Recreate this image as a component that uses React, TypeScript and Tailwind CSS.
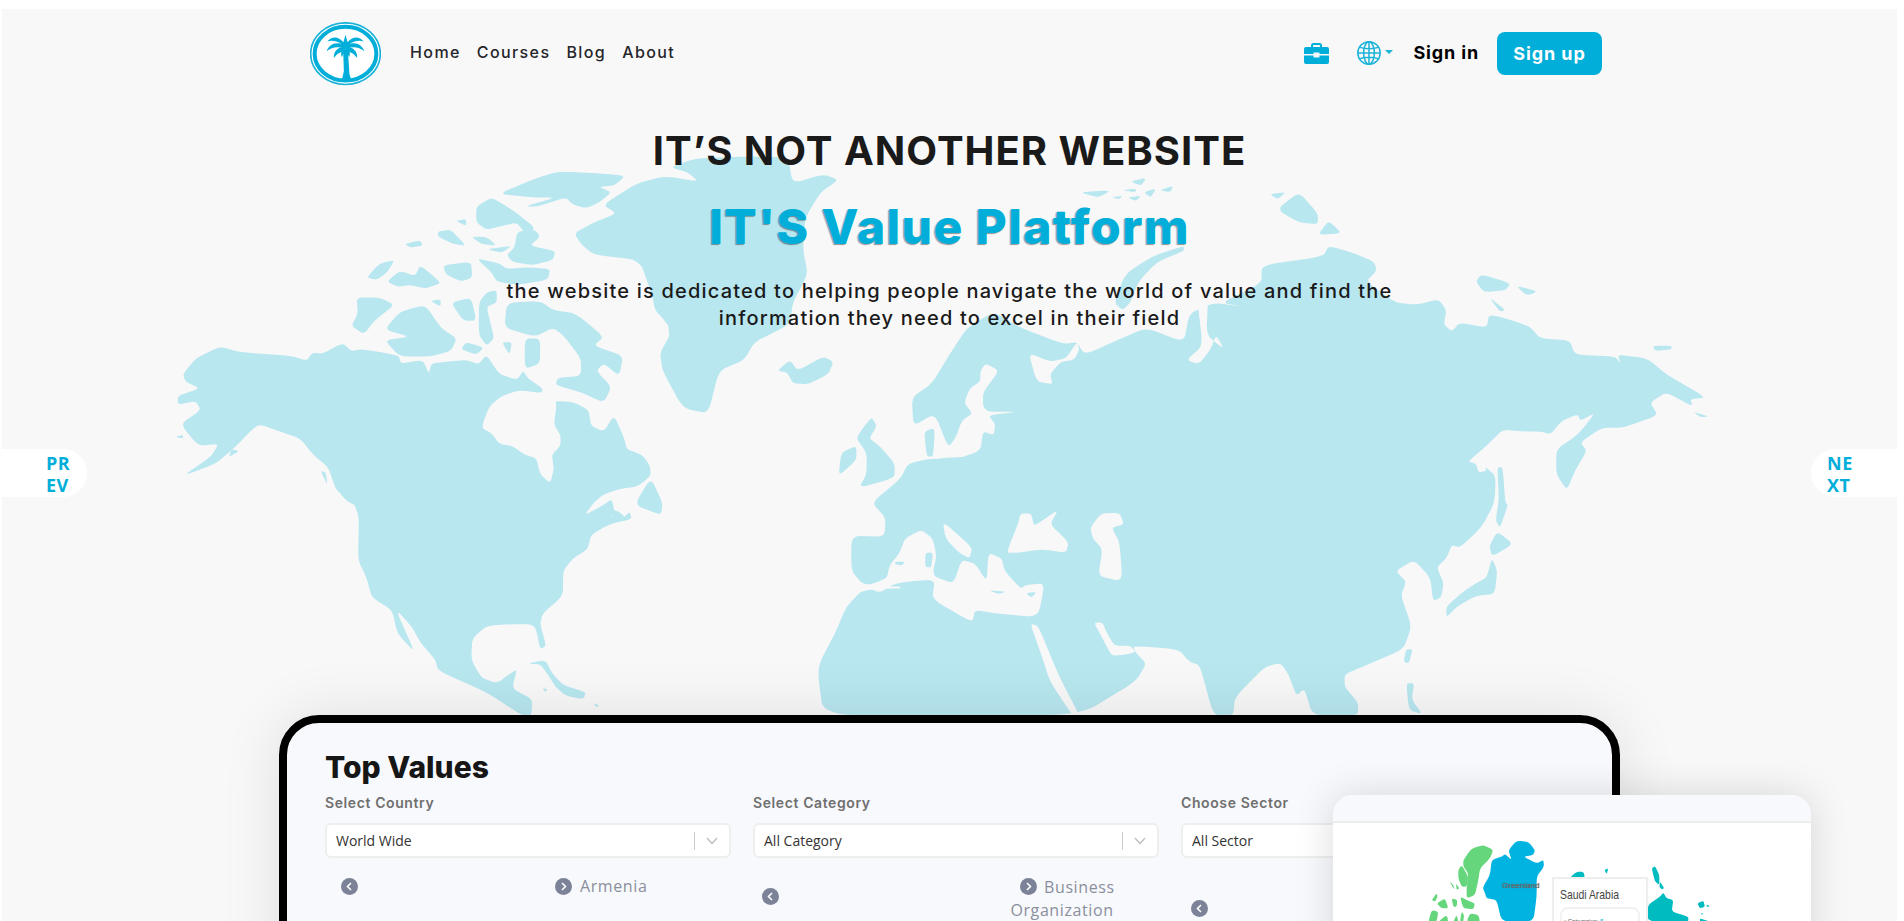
import React from "react";

type P = number[];
const smooth = (p: P) => {
  const n = p.length / 2;
  const pt = (i: number) => [p[((i + n) % n) * 2], p[((i + n) % n) * 2 + 1]];
  const t = 0.28;
  let d = "";
  for (let i = 0; i < n; i++) {
    const a = pt(i - 1);
    const c = pt(i);
    const b = pt(i + 1);
    const s = [c[0] + (a[0] - c[0]) * t, c[1] + (a[1] - c[1]) * t];
    const e = [c[0] + (b[0] - c[0]) * t, c[1] + (b[1] - c[1]) * t];
    d += `${i === 0 ? "M" : "L"}${s[0]} ${s[1]}Q${c[0]} ${c[1]} ${e[0]} ${e[1]}`;
  }
  return d + "Z";
};
const LAND = "#b8e7f0";
const SEA = "#f8f8f8";

const west: P[] = [
  [45,600,70,555,118,522,155,538,255,548,288,562,298,540,320,542,358,512,375,535,395,530,440,540,468,548,472,570,515,560,527,598,532,570,560,565,600,560,625,572,640,545,665,600,700,615,712,590,720,610,750,640,748,652,705,645,670,660,645,690,630,750,650,765,665,795,690,800,715,825,738,835,745,880,765,905,772,865,768,825,785,800,785,770,772,740,777,690,775,675,810,678,840,700,845,745,870,760,890,715,910,780,915,810,945,825,960,855,962,885,935,915,905,920,870,935,850,960,832,995,870,965,885,950,890,975,885,1000,910,1000,920,985,925,1005,880,1020,845,1050,838,1090,810,1115,790,1150,790,1220,750,1270,745,1300,757,1360,745,1370,735,1300,680,1300,640,1305,612,1340,610,1400,630,1450,660,1465,680,1445,700,1425,690,1480,730,1510,728,1556,710,1556,640,1490,545,1430,540,1400,510,1350,495,1310,470,1270,465,1268,500,1380,465,1325,455,1260,415,1225,405,1170,388,1120,390,1000,380,960,345,925,330,860,300,825,275,780,235,760,195,740,180,755,150,800,110,850,45,885,100,830,115,795,75,800,40,740,80,700,70,675,35,685,35,660,78,640,50,620],
  [812,205,850,175,895,150,868,125,935,65,990,45,1055,60,1035,35,1000,20,1050,-5,1150,-10,1231,-8,1240,65,1300,40,1330,55,1295,90,1265,160,1260,250,1270,320,1240,400,1235,460,1165,510,1145,560,1095,590,1075,710,1025,695,985,590,980,540,1000,490,990,450,970,420,965,380,940,280,850,265,825,235],
  [662,95,740,50,780,32,870,38,912,45,890,72,860,75,885,90,860,120,835,135,810,125,795,105,740,130,715,130,775,105,735,105],
  [620,130,650,105,680,130,700,150,735,190,720,215,700,175,670,185,640,195,620,175],
  [700,200,735,195,745,215,725,240,775,255,770,280,730,295,690,285,680,265,695,245],
  [545,200,570,195,600,240,575,235,545,215],
  [580,170,600,165,600,185],
  [610,215,640,215,660,240,630,235],
  [640,250,690,240,670,260],
  [480,235,510,225,515,240,490,245],
  [405,330,430,290,460,280,445,315,425,335],
  [445,340,470,310,500,325,510,295,540,330,550,345,520,360,490,350,465,355],
  [555,295,610,285,612,330,590,340,560,320],
  [620,275,665,290,680,305,720,300,765,305,760,335,700,350,660,340,650,315],
  [385,385,430,385,460,405,420,450,400,488,375,465,388,430],
  [440,475,470,425,520,405,550,470,582,500,570,535,530,550,470,550,440,505,490,495],
  [530,395,550,390,550,410],
  [570,400,610,385,620,450,595,450],
  [625,400,640,370,660,365,660,400,640,410,650,470,655,500,640,520,625,490],
  [680,400,745,395,770,420,815,430,870,495,850,520,908,548,900,605,870,570,855,590,885,635,870,680,825,650,775,630,780,610,825,605,825,555,790,490,770,470,735,495,675,470],
  [715,500,745,500,745,570,715,585],
  [600,510,635,525,620,545,590,530],
  [670,510,690,510,685,545],
  [1210,590,1235,560,1250,590,1300,550,1320,565,1310,600,1270,628,1240,625,1230,595],
  [1375,755,1395,720,1405,745,1390,780,1410,800,1440,850,1440,890,1370,918,1385,880,1385,820,1365,780],
  [1335,820,1365,800,1365,840,1330,885],
  [1395,960,1445,900,1465,865,1520,835,1600,830,1600,1200,1380,1192,1355,1150,1355,1052,1420,1055,1422,1000],
  [1380,1200,1345,1250,1325,1320,1288,1420,1300,1556,1600,1556,1600,1200],
  [720,1410,755,1400,770,1440,790,1470,835,1490,830,1510,795,1500,775,1475,760,1440,745,1412],
  [850,1520,862,1528,855,1532],
  [750,1478,760,1482,755,1490],
  [962,890,985,960,982,995,930,965],
  [315,870,325,875,328,910],
  [350,930,385,955,400,975,370,960],
  [140,810,155,815,135,832],
  [30,775,45,770,45,780],
  [880,975,900,985,915,1005,890,1005],
];
const westSea: P[] = [
  [1380,1192,1410,1212,1440,1185,1520,1172,1515,1150,1522,1110,1515,1060,1492,1035,1460,1060,1450,1100,1430,1135,1425,1170,1400,1185],
];
const westIsles: P[] = [
  [1500,1100,1515,1100,1512,1140,1500,1140],
  [1440,1125,1460,1125,1455,1135,1442,1133],
];
const east: P[] = [
  [0,895,15,850,60,835,95,842,150,815,155,760,175,770,178,740,165,715,220,705,165,705,155,690,155,650,185,590,160,570,150,590,150,620,130,640,120,680,135,710,115,730,105,775,90,805,65,710,25,745,22,665,60,625,90,550,125,470,175,425,225,470,305,515,330,510,345,545,420,495,460,470,530,510,540,430,585,400,640,410,600,400,675,345,675,295,790,270,800,240,845,260,885,285,890,310,870,340,925,400,965,405,1005,390,1020,420,1015,460,1030,480,1045,455,1095,470,1100,430,1175,465,1195,500,1250,505,1260,545,1335,550,1345,570,1340,545,1395,555,1430,600,1505,665,1475,670,1480,690,1430,650,1400,680,1415,715,1350,750,1310,750,1270,790,1282,815,1260,870,1245,925,1225,880,1225,810,1265,770,1298,708,1270,730,1265,712,1235,730,1215,768,1195,760,1165,760,1125,755,1095,800,1060,845,1075,850,1080,875,1095,870,1092,858,1112,885,1110,960,1085,1030,1045,1085,1030,1078,1020,1115,1002,1140,1015,1185,1010,1225,995,1235,990,1170,960,1120,925,1150,945,1180,935,1220,955,1305,940,1370,870,1415,830,1440,830,1475,855,1520,855,1556,770,1556,755,1480,740,1500,725,1440,710,1408,680,1420,625,1505,622,1556,585,1556,560,1415,540,1405,520,1370,435,1360,440,1380,460,1410,440,1460,335,1556,0,1556],
  [45,760,65,750,62,830,50,830],
  [400,400,420,320,470,270,530,240,530,255,480,285,445,340,430,400,415,420],
];
const eastSea: P[] = [
  [240,540,255,620,285,628,280,600,300,565,325,560,335,530,330,510,310,555,280,565],
  [555,392,575,385,572,490,605,530,590,490,580,530,558,572,535,560,565,520],
  [205,1075,220,1020,225,990,245,990,250,1025,270,1005,295,980,280,1020,315,1070,310,1100,265,1090,220,1100,200,1100],
  [355,1030,375,990,410,988,418,1020,395,1030,410,1070,415,1180,370,1165,378,1090,360,1060],
  [0,1180,65,1175,60,1230,135,1295,140,1260,180,1270,258,1280,270,1185,235,1190,225,1200,195,1150,190,1115,165,1100,162,1180,140,1130,115,1120,100,1185,70,1170,50,1150],
  [80,1012,135,1085,130,1115,110,1100,85,1060],
  [243,1298,258,1305,290,1420,302,1460,335,1556,322,1556,280,1460,265,1390],
  [362,1295,378,1295,385,1320,400,1360,430,1360,440,1378,420,1385,395,1388,378,1340],
  [640,1510,655,1510,650,1556,640,1556],
];
const eastIsles: P[] = [
  [1115,860,1125,860,1130,960,1135,965,1120,1030,1112,1010,1118,950],
  [1115,1040,1145,1075,1105,1110,1100,1080],
  [1105,1115,1115,1150,1110,1215,1075,1220,1040,1250,1020,1280,1020,1250,1050,1210,1075,1185,1095,1170],
  [945,1370,957,1370,950,1410,940,1405],
  [945,1465,960,1465,955,1510,975,1552,950,1540],
  [335,90,395,85,370,105],
  [395,105,415,100,410,110],
  [415,85,440,80,440,90],
  [430,60,460,50,450,72],
  [425,105,450,100,440,115],
  [455,90,478,80,468,105],
  [485,85,510,72,505,90],
  [690,95,720,90,705,110],
  [710,130,745,90,780,150,780,180,745,175,710,145],
  [780,210,800,170,825,205],
  [1075,340,1085,320,1140,345,1130,365,1090,370],
  [1150,352,1190,368,1170,380],
  [1100,385,1130,420,1120,425],
  [1405,520,1440,520,1440,530,1410,535],
  [1480,705,1510,718,1495,720],
  [165,1205,198,1208,185,1215],
  [235,1212,255,1210,245,1225],
];

const WEST = "translate(160 160) scale(0.5102 0.35714)";
const EAST = "translate(900 160) scale(0.53571 0.35714)";

function WorldMap() {
  return (
    <svg className="absolute left-[-2px] top-[-9px]" width={1904} height={921} viewBox="0 0 1904 921">
      <g transform={WEST}>{west.map((p, i) => <path key={i} d={smooth(p)} fill={LAND} />)}</g>
      <g transform={EAST}>{east.map((p, i) => <path key={i} d={smooth(p)} fill={LAND} />)}</g>
      <g transform={WEST}>
        <ellipse cx={985} cy={472} rx={12} ry={20} fill={SEA} />
        <ellipse cx={792} cy={552} rx={8} ry={18} fill={SEA} />
        <ellipse cx={735} cy={675} rx={10} ry={8} fill={SEA} />
        <ellipse cx={763} cy={686} rx={5} ry={9} fill={SEA} />
        {westSea.map((p, i) => <path key={i} d={smooth(p)} fill={SEA} />)}
      </g>
      <g transform={EAST}>{eastSea.map((p, i) => <path key={i} d={smooth(p)} fill={SEA} />)}</g>
      <g transform={WEST}>{westIsles.map((p, i) => <path key={i} d={smooth(p)} fill={LAND} />)}</g>
      <g transform={EAST}>{eastIsles.map((p, i) => <path key={i} d={smooth(p)} fill={LAND} />)}</g>
    </svg>
  );
}

function Logo() {
  return (
    <svg width={71} height={64} viewBox="28 22 214 192" className="mt-px">
      <ellipse cx={135} cy={117} rx={105} ry={93} fill="#fff" stroke="#1cb3d9" strokeWidth={5} />
      <ellipse cx={135} cy={117} rx={93} ry={81} fill="none" stroke="#00aed9" strokeWidth={12} />
      <g fill="#00aed9">
        <path d="M135 60L126 92H144Z" />
        <path d="M135 90C115 62 95 64 80 80C100 74 120 82 135 97Z" />
        <path d="M135 90C155 62 175 64 190 80C170 74 150 82 135 97Z" />
        <path d="M135 92C105 78 85 90 78 110C95 95 115 96 135 102Z" />
        <path d="M135 92C165 78 185 90 192 110C175 95 155 96 135 102Z" />
        <path d="M135 95C112 98 98 110 100 130C110 116 122 110 135 108Z" />
        <path d="M135 95C158 98 172 110 170 130C160 116 148 110 135 108Z" />
        <path d="M126 100C122 108 120 120 124 128C128 118 132 112 136 106Z" />
        <path d="M144 100C148 108 150 120 146 128C142 118 138 112 134 106Z" />
        <path d="M128 105H142L147 180L153 196H124L130 170Z" />
      </g>
    </svg>
  );
}

function Briefcase() {
  return (
    <svg width={25} height={21} viewBox="0 0 25 21">
      <rect x={8} y={1} width={9} height={5} rx={1.5} fill="none" stroke="#00aed9" strokeWidth={2} />
      <path d="M2 4H23A2 2 0 0 1 25 6V11H15.5V9.5H9.5V11H0V6A2 2 0 0 1 2 4Z" fill="#00aed9" />
      <path d="M0 12.5H9.5V14.5H15.5V12.5H25V19A2 2 0 0 1 23 21H2A2 2 0 0 1 0 19Z" fill="#00aed9" />
    </svg>
  );
}

function Globe() {
  return (
    <svg width={24} height={24} viewBox="0 0 24 24" fill="none" stroke="#1cb3d9" strokeWidth={1.5}>
      <circle cx={12} cy={12} r={11.2} />
      <ellipse cx={12} cy={12} rx={5.4} ry={11.2} />
      <path d="M12 1V23M1 12H23M2.8 6.4C8 8 16 8 21.2 6.4M2.8 17.6C8 16 16 16 21.2 17.6" />
    </svg>
  );
}

function Arrow({ right = false }: { right?: boolean }) {
  return (
    <svg width={17} height={17} viewBox="0 0 17 17" className="inline-block shrink-0 align-[-2px]">
      <circle cx={8.5} cy={8.5} r={8.5} fill="#7c8398" />
      <path d={right ? "M7 5L10.5 8.5L7 12" : "M10 5L6.5 8.5L10 12"} fill="none" stroke="#fff" strokeWidth={1.6} />
    </svg>
  );
}

function Select({ label, value }: { label: string; value: string }) {
  return (
    <div>
      <div className="h-5 font-['Inter'] text-[14px] leading-5 font-semibold tracking-[0.6px] text-[#6f6f6f]">{label}</div>
      <div className="mt-[10px] flex h-[35px] items-center rounded-[6px] border-2 border-[#eeeeee] bg-white pl-[9px] pr-[10px]">
        <span className="flex-1 font-['Open_Sans'] text-[14px] text-[#333]">{value}</span>
        <span className="h-[18px] w-px bg-[#cccccc]" />
        <svg width={12} height={8} viewBox="0 0 12 8" className="ml-[11px] mr-[1px]" fill="none" stroke="#bbb" strokeWidth={1.2}><path d="M1 1L6 6.5L11 1" /></svg>
      </div>
    </div>
  );
}

const itemText = "font-['Open_Sans'] text-[16px] leading-[23px] tracking-[0.6px] text-[#8a8f9c]";

function MiniMap() {
  const g: P[] = [
    [430,240,455,205,490,195,520,210,510,235,480,265,475,300,465,345,440,355,440,320,445,280,430,260],
    [415,270,425,255,445,290,440,320,425,320,415,295],
    [388,305,400,315,405,330],[408,310,418,325,410,330],[335,360,350,340,353,350,345,365],
    [350,370,375,355,385,385,365,385],[395,355,412,360,410,380,400,380],[420,350,440,360,465,370,460,388,430,385],
    [325,425,335,390,355,395,350,425],[355,425,380,405,385,425],[400,425,410,405,415,425],[420,425,425,395,432,405,430,425],[440,425,450,400,475,405,480,425],
  ];
  const b: P[] = [[488,322,510,285,515,240,545,230,555,222,575,240,565,210,590,182,625,185,645,210,640,225,610,230,650,250,670,240,672,260,650,290,650,350,640,425,545,425,530,360,500,355,495,340]];
  const t: P[] = [
    [995,265,1005,258,1018,285,1018,315,1005,305],[1020,305,1033,325,1025,328,1018,320],
    [983,375,1020,350,1030,338,1040,355,1060,360,1055,395,1105,410,1105,425,983,425],
    [1132,370,1150,362,1155,380,1140,385],[1160,373,1170,380,1160,380],[1143,400,1150,400,1146,405],[1140,415,1170,425,1140,425],
    [750,292,770,275,790,275,795,292],[853,270,865,265,860,282],
  ];
  return (
    <svg className="absolute left-[-13px] top-[-43px]" width={520} height={141} viewBox="0 0 1560 423">
      {g.map((p, i) => <path key={i} d={smooth(p)} fill="#65d67b" />)}
      {b.map((p, i) => <path key={i} d={smooth(p)} fill="#00b3e0" />)}
      {t.map((p, i) => <path key={i} d={smooth(p)} fill="#00bcc0" />)}
    </svg>
  );
}

export default function App() {
  return (
    <div className="h-[921px] overflow-hidden bg-white pl-[2px] pr-[7px] pt-[9px]">
      <div className="relative h-[912px] overflow-hidden bg-[#f8f8f8]">
        <WorldMap />

        <div className="relative flex h-[88px] items-center pl-[308px] pr-[295px] font-['Inter']">
          <Logo />
          <nav className="ml-[29px] flex gap-[16px] pb-[2px] text-[16px] font-medium tracking-[1.4px] text-[#25252b]">
            <span>Home</span><span>Courses</span><span>Blog</span><span>About</span>
          </nav>
          <div className="ml-auto flex items-center">
            <Briefcase />
            <span className="ml-[28px]"><Globe /></span>
            <span className="ml-[4px] mb-[3px] h-0 w-0 border-x-[4px] border-t-[4px] border-x-transparent border-t-[#1cb3d9]" />
            <span className="ml-[20px] mb-[2px] text-[18px] font-bold tracking-[0.85px] text-black">Sign in</span>
            <span className="ml-[18px] flex h-[43px] w-[105px] items-center justify-center rounded-[8px] bg-[#00aed9] text-[18px] font-bold tracking-[0.9px] text-white">Sign up</span>
          </div>
        </div>

        <div className="relative text-center font-['Inter']">
          <h1 className="mt-[30px] text-[40px] leading-[48px] font-bold tracking-[1px] text-[#1a1a1a]">IT’S NOT ANOTHER WEBSITE</h1>
          <h2 className="mt-[23px] text-[48px] leading-[58px] font-extrabold tracking-[1.4px] text-[#00aed9] [text-shadow:-1px_1px_1px_rgba(0,0,0,0.4)]">IT'S Value Platform</h2>
          <p className="mx-auto mt-[22px] w-[960px] text-[20px] leading-[27px] font-medium tracking-[1.2px] text-[#1a1a1a]">
            the website is dedicated to helping people navigate the world of value and find the<br />information they need to excel in their field
          </p>
        </div>

        <div className="absolute left-0 top-[440px] flex h-12 w-[85px] items-center rounded-r-[24px] bg-white pl-[44px] pt-[2px] font-['Open_Sans'] text-[18px] leading-[22px] font-bold tracking-[0.5px] text-[#00aed9]">
          <span>PR<br />EV</span>
        </div>
        <div className="absolute right-0 top-[440px] flex h-12 w-[86px] items-center rounded-l-[24px] bg-white pl-[16px] pt-[2px] font-['Open_Sans'] text-[18px] leading-[22px] font-bold tracking-[0.5px] text-[#00aed9]">
          <span>NE<br />XT</span>
        </div>

        <div className="relative mx-[277px] mt-[383px] h-[400px] rounded-[40px] border-8 border-black bg-[#f8f9fd] pl-[38px] pr-[25px] pt-[27px] shadow-[0_0_60px_rgba(0,0,0,0.1)]">
          <div className="font-['Inter'] text-[30px] leading-[34px] font-extrabold text-[#161616]">Top Values</div>
          <div className="mt-[9px] grid grid-cols-3 gap-x-[22px]">
            <Select label="Select Country" value="World Wide" />
            <Select label="Select Category" value="All Category" />
            <Select label="Choose Sector" value="All Sector" />
          </div>
          <div className="mt-[18px] grid grid-cols-3 gap-x-[22px]">
            <div className="flex items-start pl-[16px] pt-[2px]">
              <Arrow />
              <span className={`-mt-[3px] ml-[197px] flex items-center gap-[8px] ${itemText}`}><Arrow right />Armenia</span>
            </div>
            <div className="flex items-start pl-[9px]">
              <span className="mt-[9px]"><Arrow /></span>
              <div className={`ml-[218px] w-[130px] text-center ${itemText}`}><span className="ml-[11px] mr-[2px]"><Arrow right /></span> Business<br />Organization</div>
            </div>
            <div className="pl-[10px] pt-[21px]"><Arrow /></div>
          </div>
        </div>

        <div className="absolute left-[1331px] top-[786px] h-[200px] w-[478px] overflow-hidden rounded-[20px] bg-white shadow-[0_0_40px_rgba(0,0,0,0.14)]">
          <div className="h-[28px] border-b-2 border-[#ededed] bg-[#f8f9fd]" />
          <div className="relative">
            <MiniMap />
            <span className="absolute left-[169px] top-[57px] font-['Liberation_Sans'] text-[8px] text-[#666] [text-shadow:0_0_1px_#666]">Greenland</span>
            <div className="absolute left-[219px] top-[54px] h-[120px] w-[96px] border-2 border-[#eee] bg-white pl-[6px] pt-[6px]">
              <div className="origin-left scale-x-[0.8] whitespace-nowrap font-['Liberation_Sans'] text-[13px] leading-[20px] text-[#444]">Saudi Arabia</div>
              <div className="mt-[2px] h-[60px] w-[80px] rounded-[8px] border-2 border-[#f2f2f2] pl-[2px] pt-[8px] font-['Liberation_Sans'] text-[6px] leading-[8px] text-[#444]">• Categories: <span className="text-[#00aed9]">5</span></div>
            </div>
          </div>
        </div>
      </div>
    </div>
  );
}
